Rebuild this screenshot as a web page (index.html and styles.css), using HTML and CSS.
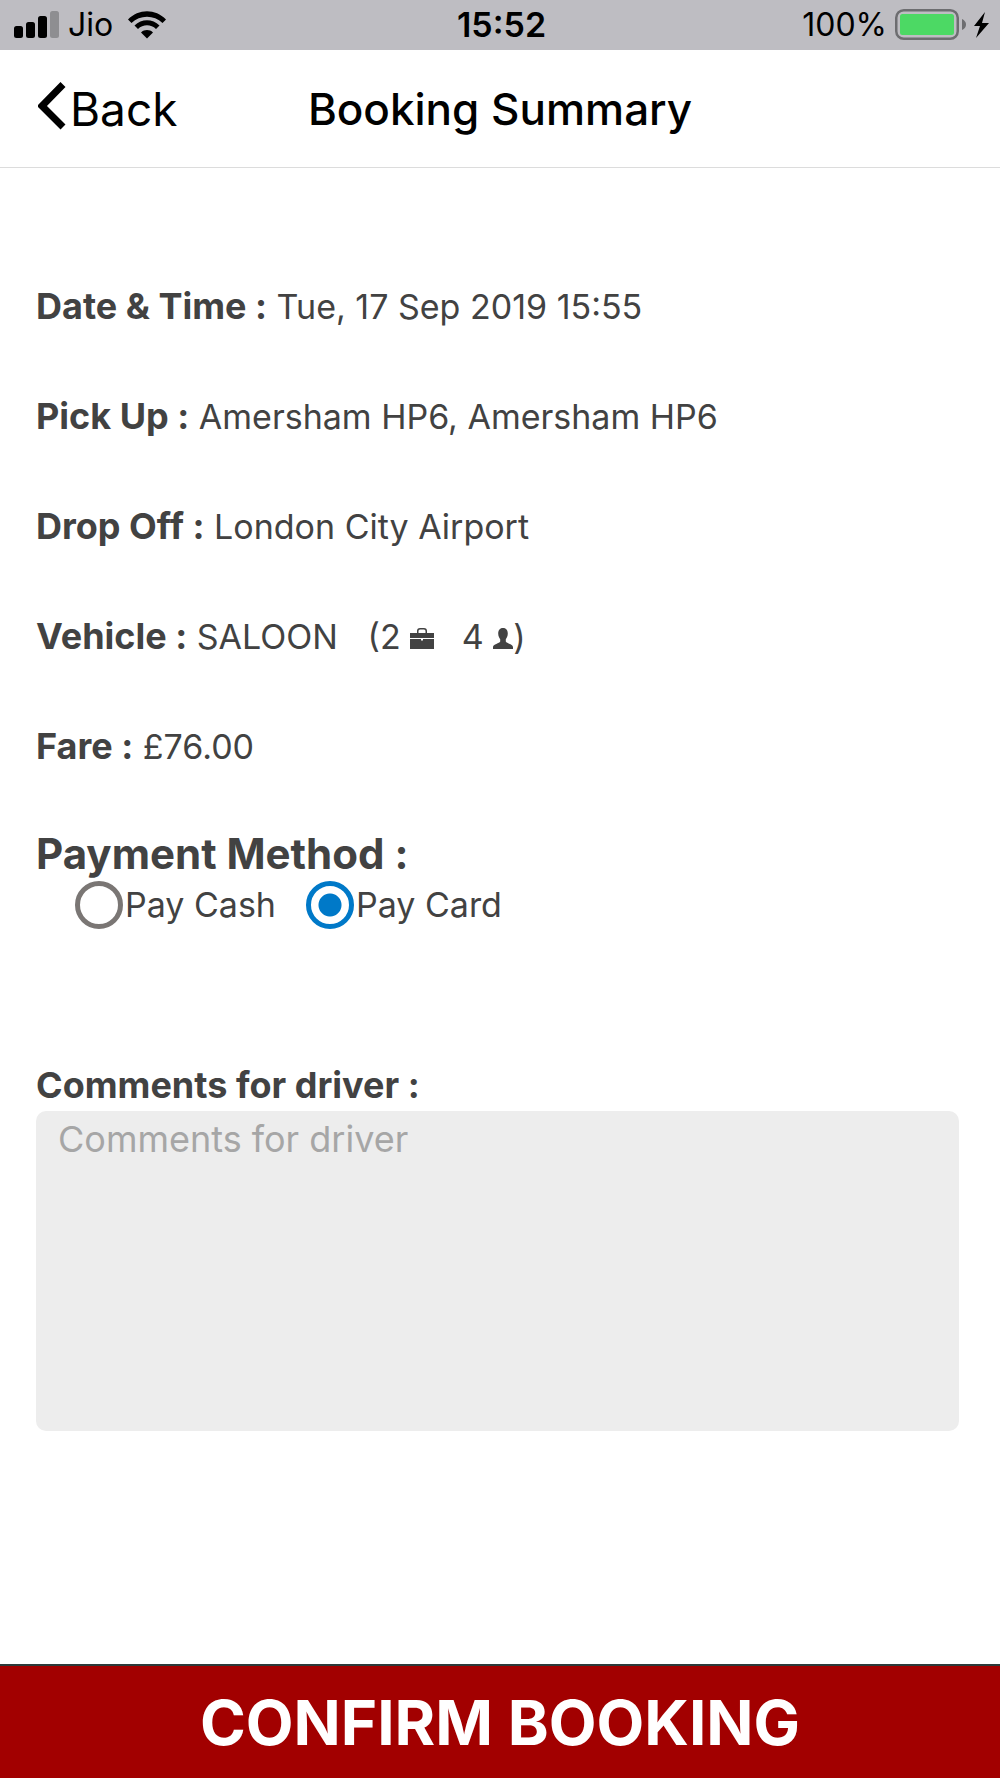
FILE: index.html
```html
<!DOCTYPE html>
<html lang="en">
<head>
<meta charset="utf-8">
<meta name="viewport" content="width=device-width, initial-scale=1">
<title>Booking Summary</title>
<link rel="stylesheet" href="styles.css">
</head>
<body>
<div class="status-bar">
  <div class="status-left">
    <svg class="signal" viewBox="0 0 46 28" aria-hidden="true">
      <rect x="0" y="15" width="9" height="12" rx="2.5"/>
      <rect x="12" y="11" width="9" height="16" rx="2.5"/>
      <rect x="24" y="5" width="9" height="22" rx="2.5"/>
      <rect class="signal-off" x="36" y="0" width="9" height="27" rx="2.5"/>
    </svg>
    <span>Jio</span>
    <svg class="wifi" viewBox="0 0 38 28" aria-hidden="true">
      <path d="M0 8.5C10.5-2.5 27.500-2.500 38 8.500L34.500 12C26 3.500 12 3.500 3.500 12Z"/>
      <path d="M6.500 14.500C13.500 7.500 24.500 7.500 31.500 14.500L28 18C23 13 15 13 10 18Z"/>
      <path d="M13 21.500C16.500 18.300 21.500 18.300 25 21.500L19 27.500Z"/>
    </svg>
  </div>
  <time class="clock">15:52</time>
  <div class="status-right">
    <span>100%</span>
    <svg class="battery" viewBox="0 0 71 32" aria-hidden="true">
      <rect class="battery-case" x="1.250" y="1.250" width="61.500" height="28.500" rx="7.500"/>
      <rect class="battery-fill" x="5" y="5" width="54" height="21" rx="2.500"/>
      <path class="battery-tip" d="M67 10Q71 12 71 15.500T67 21Z"/>
    </svg>
    <svg class="bolt" viewBox="0 0 16 26" aria-hidden="true">
      <path d="M12 0L1 14H7L3 26L16 11H9Z"/>
    </svg>
  </div>
</div>

<header class="nav-bar">
  <a class="back" href="#">
    <svg class="chevron" viewBox="0 0 28 48" aria-hidden="true"><path d="M25 2.500L4 24L25 45"/></svg>
    <span>Back</span>
  </a>
  <h1 class="title">Booking Summary</h1>
</header>

<form class="booking">
  <main class="content">
    <p class="row"><strong>Date &amp; Time :</strong> Tue, 17 Sep 2019 15:55</p>
    <p class="row"><strong>Pick Up :</strong> Amersham HP6, Amersham HP6</p>
    <p class="row"><strong>Drop Off :</strong> London City Airport</p>
    <p class="row"><strong>Vehicle :</strong> SALOON
      <span class="capacity">(2
        <svg class="bag" viewBox="0 0 24 21" aria-hidden="true">
          <path d="M0 5H7V3Q7 0 10 0H14Q17 0 17 3V5H24V10H0ZM8.500 5H15.500V3Q15.500 1.500 14 1.500H10Q8.500 1.500 8.500 3Z" fill-rule="evenodd"/>
          <path d="M0 11H11V12.500H13V11H24V21H0Z"/>
        </svg>
        <span class="seats">4</span>
        <svg class="person" viewBox="0 0 20 21" aria-hidden="true">
          <path d="M10 0C13.500 0 14.800 2.500 14.800 5.500C14.800 8.500 13.500 10 12.800 11.200V13.500C13.500 15.500 20 16 20 19V21H0V19C0 16 6.500 15.500 7.200 13.500V11.200C6.500 10 5.200 8.500 5.200 5.500C5.200 2.500 6.500 0 10 0Z"/>
        </svg>)</span>
    </p>
    <p class="row"><strong>Fare :</strong> £76.00</p>

    <fieldset class="payment">
      <legend>Payment Method :</legend>
      <div class="options">
        <label class="option"><input type="radio" name="payment" value="cash">Pay Cash</label>
        <label class="option"><input type="radio" name="payment" value="card" checked>Pay Card</label>
      </div>
    </fieldset>

    <label class="comments-label" for="comments">Comments for driver :</label>
    <textarea class="comments" id="comments" placeholder="Comments for driver"></textarea>
  </main>
  <button class="confirm" type="submit">CONFIRM BOOKING</button>
</form>
</body>
</html>
```
FILE: styles.css
```css
* { box-sizing: border-box; }

body {
  margin: 0;
  min-height: 100vh;
  display: flex;
  flex-direction: column;
  background: #fff;
  color: #424242;
  font-family: Inter, "Liberation Sans", sans-serif;
  font-size: 34px;
  line-height: 40px;
}

/* Status bar */
.status-bar {
  display: grid;
  grid-template-columns: 1fr auto 1fr;
  align-items: center;
  height: 50px;
  padding: 0 11px 0 14px;
  background: #bebdc2;
  color: #000;
  font-size: 32px;
}
.status-left, .status-right { display: flex; align-items: center; }
.status-right { justify-content: flex-end; }
.signal { width: 46px; height: 28px; margin-right: 8px; }
.signal-off { fill: #8e8e91; }
.wifi { width: 38px; height: 28px; margin-left: 15px; }
.clock { font-size: 34px; font-weight: 600; }
.battery { width: 71px; height: 32px; margin: 0 7px 0 8px; }
.battery-case { fill: none; stroke: #6d6d70; stroke-width: 2.5; }
.battery-fill { fill: #4cd964; }
.battery-tip { fill: #6d6d70; }
.bolt { width: 16px; height: 26px; }

/* Navigation bar */
.nav-bar {
  display: grid;
  grid-template-columns: 1fr auto 1fr;
  align-items: center;
  height: 118px;
  padding: 0 38px;
  border-bottom: 1px solid #dcdcdc;
  color: #000;
}
.back {
  display: flex;
  align-items: center;
  gap: 4px;
  color: inherit;
  font-size: 46px;
  text-decoration: none;
}
.chevron { width: 28px; height: 48px; margin-bottom: 6px; }
.chevron path { fill: none; stroke: #000; stroke-width: 7; }
.title { margin: 0; font-size: 44px; font-weight: 500; }

/* Booking details */
.booking { flex: 1; display: flex; flex-direction: column; }
.content {
  flex: 1;
  display: flex;
  flex-direction: column;
  padding: 118px 41px 40px 36px;
}
.row { margin: 0 0 69px; }
.row strong, .comments-label { font-size: 36px; font-weight: 700; }
.capacity { margin-left: 20px; }
.bag, .person { fill: #424242; }
.bag { width: 24px; height: 21px; }
.person { width: 20px; height: 21px; }
.seats { margin-left: 18px; }

.payment { margin: -9px 0 136px; padding: 0; border: 0; }
.payment legend { padding: 0; font-size: 42px; font-weight: 700; line-height: 54px; }
.options { display: flex; gap: 30px; padding-left: 39px; }
.option { display: flex; align-items: center; gap: 2px; }
.option input {
  appearance: none;
  width: 48px;
  height: 48px;
  margin: 0;
  border: 5px solid #7a7674;
  border-radius: 50%;
}
.option input:checked {
  border-color: #0079c8;
  background: radial-gradient(circle, #0079c8 11px, transparent 12px);
}

.comments {
  height: 320px;
  margin: 6px 0 0;
  padding: 8px 22px;
  border: 0;
  border-radius: 10px;
  background: #ededed;
  color: inherit;
  font: inherit;
  font-size: 36px;
  resize: none;
}
.comments::placeholder { color: #a6a6a6; opacity: 1; }

.confirm {
  height: 114px;
  border: 0;
  border-top: 2px solid #2c3a3a;
  background: #a20000;
  color: #fff;
  font: 700 62px Inter, "Liberation Sans", sans-serif;
}
```
